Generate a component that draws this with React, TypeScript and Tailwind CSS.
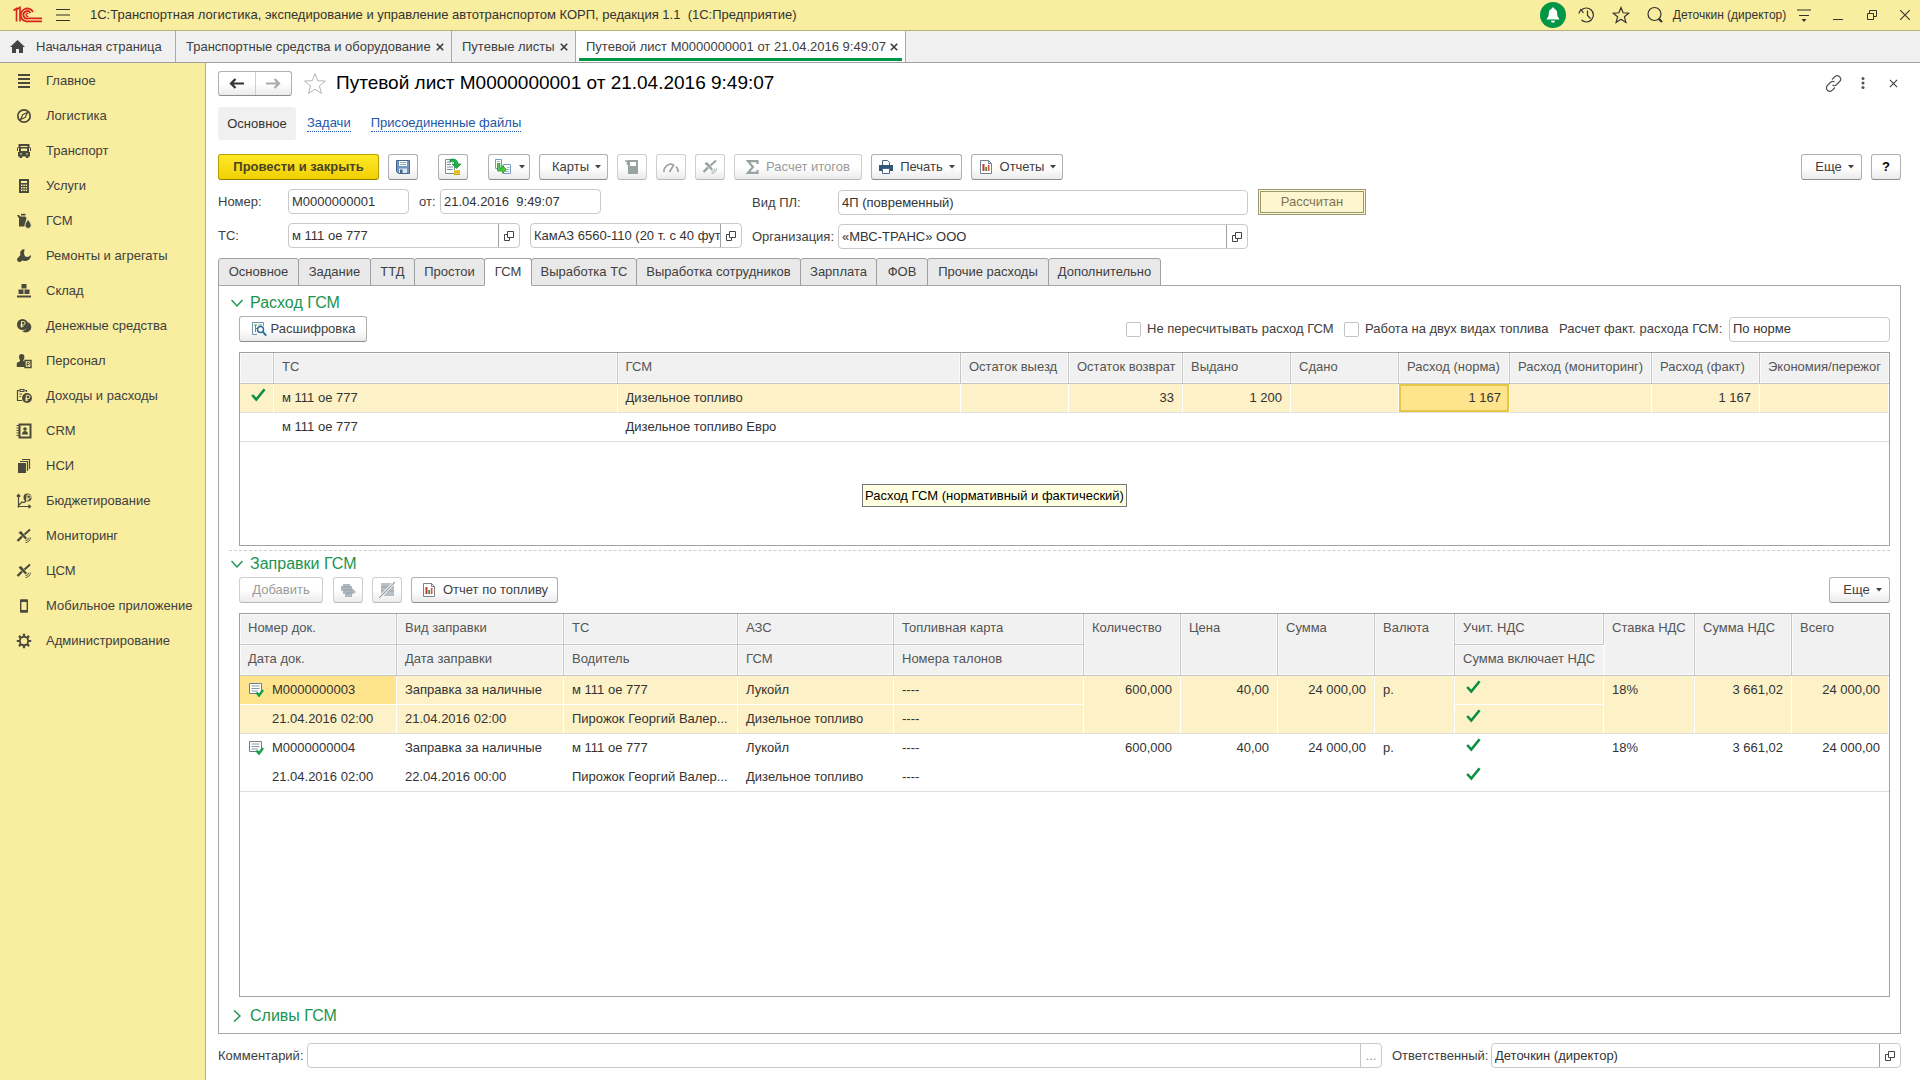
import React from 'react';
import clsx from 'clsx';

type IconProps = { className?: string };

const COLOR = '#4a4a3c';

/* ---------- shared icons ---------- */

const OneCLogo = () => (
    <svg width="30" height="18" viewBox="0 0 30 18" fill="none" stroke="#d8251c" strokeWidth="1.8">
        <path d="M1.500 4.500 4.500 2.500V15.500M8 15.500V1.500L4.500 3.500" strokeWidth="1.600" />
        <path d="M21 6A6.500 6.500 0 1 0 16.500 15.400H30" />
        <path d="M18.300 7A3.700 3.700 0 1 0 16.300 12.400H30" />
        <path d="M16.200 7.800a1.400 1.400 0 1 0 .2 2" strokeWidth="1.200" />
    </svg>
);

const CheckMark: React.FC<IconProps> = ({ className }) => (
    <svg className={className} width="15" height="14" viewBox="0 0 15 14" fill="none" stroke="#0c8f45" strokeWidth="2.600">
        <path d="M1.200 7 5.300 11.600 13.600 1.200" />
    </svg>
);

const OpenIcon = () => (
    <svg width="10" height="10" viewBox="0 0 10 10" fill="none" stroke="#444" strokeWidth="1">
        <path d="M3.500.5h6v6h-6z" />
        <path d="M3.500 3.500h-3v6h5v-3" />
    </svg>
);

const Caret = () => (
    <svg width="6" height="4" viewBox="0 0 6 4" fill="#444">
        <path d="M0 0h6L3 3.500z" />
    </svg>
);

const CrossIcon: React.FC<{ size: number; width?: number }> = ({ size, width = 1.2 }) => (
    <svg width={size} height={size} viewBox="0 0 10 10" fill="none" stroke="#3a3a3a" strokeWidth={width}>
        <path d="m1 1 8 8M9 1 1 9" />
    </svg>
);

const ReportIcon = () => (
    <svg width="16" height="16" viewBox="0 0 16 16" fill="none">
        <path d="M2.500 1.500h8l3 3v10h-11z" fill="#fff" stroke="#76838c" />
        <path d="M10.500 1.500v3h3" stroke="#76838c" />
        <path d="M4.500 5h2v7h-2z" fill="#c0392b" />
        <path d="M7.300 8h1.700v4H7.300z" fill="#3f8f3f" />
        <path d="M9.800 6h1.700v6H9.800z" fill="#d35430" />
    </svg>
);

const SatelliteShape = () => (
    <g fill="none" stroke="currentColor">
        <path d="M2.500 4.500 5 3l6 7-1.500 1.500z" fill="currentColor" stroke="none" />
        <path d="M14 1.500 8.500 6.500" strokeWidth="2" />
        <path d="M6 8.500 1.500 13" strokeWidth="2.400" />
        <path d="M9.500 14.500a5 5 0 0 0 5-5M9.500 12.700a3 3 0 0 0 3-3" strokeWidth=".9" />
    </g>
);

/* ---------- sidebar ---------- */

const Ruble: React.FC<{ x: number; y: number; color?: string }> = ({ x, y, color = '#f9ed9f' }) => (
    <path
        d={`M${x} ${y + 6}V${y}h2a1.600 1.600 0 0 1 0 3.300H${x - 1}M${x - 1} ${y + 4.8}h3`}
        fill="none"
        stroke={color}
        strokeWidth="1"
    />
);

const menuIcons: Record<string, React.ReactNode> = {
    main: <path d="M2 1h12v2H2zM2 5h12v2H2zM2 9h12v2H2zM2 13h12v2H2z" />,
    logistics: (
        <>
            <circle cx="8" cy="8" r="6.200" fill="none" stroke={COLOR} strokeWidth="1.700" />
            <path d="M11.500 4.500 9.300 9.300 4.500 11.500 6.700 6.700z" fill="none" stroke={COLOR} strokeWidth="1.200" />
        </>
    ),
    transport: (
        <>
            <path d="M2.500 1h11v3.500H15V8h-1V5h-1v4H3V5H2v3H1V4.500h1.500z" />
            <path d="M4.500 3h7v1h-7zM5 5.500h6V8H5z" fill="#f9ed9f" />
            <path d="M2 9h12v4.500h-1.500V15H10v-1.500H6V15H3.500v-1.500H2z" />
            <path d="M4 10.500h2v1H4zM10 10.500h2v1h-2z" fill="#f9ed9f" />
        </>
    ),
    services: (
        <>
            <path d="M3 1h10v14H3z" />
            <path d="M5 3h6v2H5zM5 6.500h1.500V8H5zM7.300 6.500h1.500V8H7.300zM9.600 6.500h1.500V8H9.600zM5 9h1.500v1.500H5zM7.300 9h1.500v1.500H7.300zM9.600 9h1.500v1.500H9.600zM5 11.500h1.500V13H5zM7.300 11.500h1.500V13H7.300zM9.600 11.500h1.500V13H9.600z" fill="#f9ed9f" />
        </>
    ),
    fuel: (
        <>
            <path d="M1 2h2l1.500 1.500H9.500L10.500 5l-2 8.500H3V5.500z" />
            <path d="M5 .8h4.500v1.700H5z" />
            <path d="M12 6.500s3.200 3.800 3.200 5.800a3.100 3.100 0 0 1-6.200 0c0-2 3-5.800 3-5.800z" stroke="#f9ed9f" strokeWidth=".8" />
        </>
    ),
    repair: <path d="M8.500 1C4.500 1.500 3.500 4.500 4.500 7L1.300 10.500c-1 2.500 1.500 4.500 3.700 3L6.500 12.500c4 1.500 8.500-.5 8.500-5.500l-3 2-3-.5L8 5.500z" />,
    stock: <path d="M5.500 1h5v4.500h-5zM2.500 6.500h5v4.500h-5zM8.500 6.500h5v4.500h-5zM1 12.500h14v2H1z" />,
    money: (
        <>
            <path d="M11 4c3 .5 4.500 3 4.300 5.500-.3 3-3 5-6 4.800-1.500-.1-2.500-.6-3.300-1.300C9.500 13 12.500 9 11 4z" />
            <circle cx="6.500" cy="6.500" r="5.500" />
            <Ruble x={5.5} y={3.5} />
        </>
    ),
    staff: (
        <>
            <path d="M3 4a2.700 3 0 0 1 5.400 0c0 2-1 3-1 3v1l1.600.8V14H.8v-3.500C.8 9 4 9 4 8V7S3 6 3 4z" />
            <path d="M9 7.500h6v7H9z" fill="#f9ed9f" stroke={COLOR} strokeWidth="1.400" />
            <path d="M11.200 13V9.500h1.300a.9.900 0 0 1 0 2h-1.300" fill="none" stroke={COLOR} />
        </>
    ),
    income: (
        <>
            <path d="M3 2.500H1.500v10H6M9 2.500h1.500V4M4 1.500h4v2H4zM3.500 6H6M3.500 8.500H5" fill="none" stroke={COLOR} strokeWidth="1.200" />
            <circle cx="11" cy="10" r="5" />
            <Ruble x={10.3} y={7.3} />
        </>
    ),
    crm: (
        <>
            <path d="M3.500 1.500h11v13h-11z" fill="none" stroke={COLOR} strokeWidth="2" />
            <path d="M.5 2.500H3M.5 5H3M.5 7.500H3M.5 10H3M.5 12.500H3" stroke={COLOR} strokeWidth="1.200" />
            <circle cx="9" cy="6" r="1.800" />
            <path d="M6 11.500c0-2 1.200-3.500 3-3.500s3 1.500 3 3.500z" />
        </>
    ),
    nsi: (
        <>
            <path d="M2 5h8v10H2z" />
            <path d="M4 3.500h7.500V13M6 1.500h7.500V11" fill="none" stroke={COLOR} strokeWidth="1.200" />
        </>
    ),
    budget: (
        <>
            <path d="M2.500 14.500V1.500M.8 3.500l1.700-2 1.700 2M1.500 13.500h13M12.500 11.800l2 1.700-2 1.700M3 12l3-3 2 .5L10 8" fill="none" stroke={COLOR} strokeWidth="1.200" />
            <circle cx="11.500" cy="4.500" r="4" />
            <Ruble x={11} y={2} />
        </>
    ),
    satellite: <SatelliteShape />,
    mobile: (
        <>
            <path d="M4.700 2h6.600v12H4.700z" fill="none" stroke={COLOR} strokeWidth="1.400" strokeLinejoin="round" />
            <path d="M5 2h6v2H5zM5 12h6v2H5z" />
        </>
    ),
    admin: (
        <>
            <circle cx="8" cy="8" r="4.200" fill="none" stroke={COLOR} strokeWidth="1.900" />
            <path d="M8 .8v2.700M8 12.500v2.700M.8 8h2.700M12.500 8h2.700M2.900 2.900l1.900 1.900M11.200 11.200l1.900 1.900M13.100 2.900l-1.900 1.900M4.800 11.200l-1.900 1.900" stroke={COLOR} strokeWidth="2.200" />
        </>
    ),
};

const menuItems = [
    { label: 'Главное', icon: 'main' },
    { label: 'Логистика', icon: 'logistics' },
    { label: 'Транспорт', icon: 'transport' },
    { label: 'Услуги', icon: 'services' },
    { label: 'ГСМ', icon: 'fuel' },
    { label: 'Ремонты и агрегаты', icon: 'repair' },
    { label: 'Склад', icon: 'stock' },
    { label: 'Денежные средства', icon: 'money' },
    { label: 'Персонал', icon: 'staff' },
    { label: 'Доходы и расходы', icon: 'income' },
    { label: 'CRM', icon: 'crm' },
    { label: 'НСИ', icon: 'nsi' },
    { label: 'Бюджетирование', icon: 'budget' },
    { label: 'Мониторинг', icon: 'satellite' },
    { label: 'ЦСМ', icon: 'satellite' },
    { label: 'Мобильное приложение', icon: 'mobile' },
    { label: 'Администрирование', icon: 'admin' },
];

const Sidebar = () => (
    <nav className="w-[206px] shrink-0 border-r border-[#b9b07a] bg-[#f9ed9f]">
        {menuItems.map((item) => (
            <a key={item.label} href="#" className="flex h-[35px] items-center gap-[14px] pl-4 text-[#404040]">
                <svg width="16" height="16" viewBox="0 0 16 16" fill={COLOR} color={COLOR}>
                    {menuIcons[item.icon]}
                </svg>
                {item.label}
            </a>
        ))}
    </nav>
);

/* ---------- window chrome ---------- */

const TitleBar = () => (
    <header className="flex h-[31px] shrink-0 items-center border-b border-[#b9b07a] bg-[#f9ed9f] text-[#333]">
        <div className="flex w-[90px] items-center gap-[13px] pl-3">
            <OneCLogo />
            <button aria-label="Меню">
                <svg width="16" height="14" viewBox="0 0 16 14" stroke="#333" strokeWidth="1.200">
                    <path d="M1 1.500h14M1 7h14M1 12.500h14" />
                </svg>
            </button>
        </div>
        <h1 className="flex-1 whitespace-pre">
            1С:Транспортная логистика, экспедирование и управление автотранспортом КОРП, редакция 1.1  (1С:Предприятие)
        </h1>
        <button aria-label="Уведомления" className="flex w-[34px] justify-center">
            <svg width="26" height="26" viewBox="0 0 26 26">
                <circle cx="13" cy="13" r="13" fill="#009646" />
                <path d="M13 5.500c.8 0 1.300.6 1.300 1.300 2 .7 2.900 2.400 2.900 4.700 0 2.900.9 3.900 2 5v1H6.800v-1c1.100-1.100 2-2.100 2-5 0-2.300.9-4 2.900-4.700 0-.7.500-1.300 1.300-1.300zM11 18.700h4a2 2 0 0 1-4 0z" fill="#fff" />
            </svg>
        </button>
        <button aria-label="История" className="flex w-[34px] justify-center">
            <svg width="18" height="18" viewBox="0 0 18 18" fill="none" stroke="#333" strokeWidth="1.200">
                <path d="M3 4.500A7 7 0 1 1 3.500 14" />
                <path d="M.8 7.500 2.800 3.500 5.500 6.800M9.500 4.500V9.500l3 3" />
            </svg>
        </button>
        <button aria-label="Избранное" className="flex w-[34px] justify-center">
            <svg width="18" height="18" viewBox="0 0 18 18" fill="none" stroke="#333" strokeWidth="1.200">
                <path d="m9 1.500 2.100 5.300 5.700.4-4.400 3.600 1.500 5.600L9 13.300l-4.900 3.100 1.500-5.600L1.200 7.200l5.700-.4z" />
            </svg>
        </button>
        <button aria-label="Поиск" className="flex w-[34px] justify-center">
            <svg width="18" height="18" viewBox="0 0 18 18" fill="none" stroke="#333" strokeWidth="1.200">
                <circle cx="8.500" cy="8" r="6.500" />
                <path d="m12.500 12.500 3.500 3.500" strokeWidth="2.200" />
            </svg>
        </button>
        <button className="w-[115px] text-[12px] whitespace-nowrap">Деточкин (директор)</button>
        <button aria-label="Настройки" className="flex w-[34px] justify-center">
            <svg width="16" height="16" viewBox="0 0 16 16" fill="none" stroke="#333" strokeWidth="1.200">
                <path d="M1 3h14M3 8.500h10" />
                <path d="M5.500 12h5L8 15z" fill="#333" stroke="none" />
            </svg>
        </button>
        <button aria-label="Свернуть" className="flex w-[34px] justify-center">
            <svg width="10" height="10" viewBox="0 0 10 10" stroke="#333">
                <path d="M0 9.500h10" />
            </svg>
        </button>
        <button aria-label="Развернуть" className="flex w-[34px] justify-center">
            <svg width="10" height="10" viewBox="0 0 10 10" fill="none" stroke="#333">
                <path d="M.5 3.500h6v6h-6zM2.500 3V.5h7v6H7" />
            </svg>
        </button>
        <button aria-label="Закрыть" className="flex w-[31px] justify-center">
            <CrossIcon size={12} width={1} />
        </button>
    </header>
);

const windowTabs = [
    { label: 'Транспортные средства и оборудование', width: 'w-[276px]' },
    { label: 'Путевые листы', width: 'w-[124px]' },
    { label: 'Путевой лист М0000000001 от 21.04.2016 9:49:07', width: 'w-[330px]', active: true },
];

const WindowTabs = () => (
    <div className="flex h-[32px] shrink-0 border-b border-[#a0a0a0] bg-[#f0f0f0] text-[#404040]">
        <button className="flex w-[176px] items-center gap-[11px] border-r border-[#a8a8a8] pl-[10px]">
            <svg width="15" height="13" viewBox="0 0 15 13" fill="#444">
                <path d="M7.500 0 0 7h2v6h4V9h3v4h4V7h2z" />
            </svg>
            Начальная страница
        </button>
        {windowTabs.map((tab) => (
            <div
                key={tab.label}
                className={clsx('flex border-r border-[#a8a8a8] px-[3px]', tab.width, tab.active && 'bg-white pb-px')}
            >
                <div
                    className={clsx(
                        'flex flex-1 items-center justify-between pr-[4px] pl-[7px]',
                        tab.active && 'border-b-[3px] border-[#009646] pt-[4px]',
                    )}
                >
                    <button className="whitespace-nowrap">{tab.label}</button>
                    <button aria-label="Закрыть вкладку">
                        <CrossIcon size={8} width={2} />
                    </button>
                </div>
            </div>
        ))}
    </div>
);

/* ---------- form controls ---------- */

type ButtonProps = React.ButtonHTMLAttributes<HTMLButtonElement>;

const Button: React.FC<ButtonProps> = ({ className, disabled, ...props }) => (
    <button
        disabled={disabled}
        className={clsx(
            'flex h-[26px] shrink-0 items-center justify-center rounded-[3px] border bg-linear-to-b from-white from-50% to-[#ebebeb] whitespace-nowrap',
            disabled ? 'border-[#cfcfcf] border-b-[#b8b8b8] text-[#9a9a9a]' : 'border-[#b0b0b0] border-b-[#8c8c8c] text-[#404040]',
            className,
        )}
        {...props}
    />
);

const inputBox = 'flex h-[25px] items-stretch overflow-hidden rounded-[4px] border border-[#c9c9c9] bg-white';

type FieldProps = { id: string; value: string; className?: string; open?: boolean; label?: string };

const Field: React.FC<FieldProps> = ({ id, value, className, open, label }) => (
    <div className={clsx(inputBox, className)}>
        <input id={id} aria-label={label} defaultValue={value} className="min-w-0 flex-1 pl-[3px] text-[#333] outline-none" />
        {open && (
            <button aria-label="Открыть" className="flex w-[21px] shrink-0 items-center justify-center border-l border-[#a0a0a0]">
                <OpenIcon />
            </button>
        )}
    </div>
);

const GroupTitle: React.FC<{ children: React.ReactNode; collapsed?: boolean }> = ({ children, collapsed }) => (
    <button className="flex h-[26px] items-center gap-[7px] text-[16px] text-[#1a9550]">
        <svg width="12" height="12" viewBox="0 0 12 12" fill="none" stroke="#1a9550" strokeWidth="1.400">
            <path d={collapsed ? 'm3 .500 6 5.500-6 5.500' : 'm.500 3 5.500 6 5.500-6'} />
        </svg>
        {children}
    </button>
);

/* ---------- document header ---------- */

const DocumentHeader = () => (
    <>
        <div className="flex h-[26px] items-center">
            <div className="flex h-[25px] w-[74px] rounded-[3px] border border-[#b0b0b0] border-b-[#8c8c8c] bg-linear-to-b from-white from-50% to-[#ebebeb]">
                <button aria-label="Назад" className="flex flex-1 items-center justify-center border-r border-[#cfcfcf]">
                    <svg width="15" height="11" viewBox="0 0 15 11" fill="none" stroke="#333" strokeWidth="2.200">
                        <path d="M15 5.500H2M6.500 1 2 5.500 6.500 10" />
                    </svg>
                </button>
                <button aria-label="Вперед" className="flex flex-1 items-center justify-center">
                    <svg width="15" height="11" viewBox="0 0 15 11" fill="none" stroke="#aaa" strokeWidth="2.200">
                        <path d="M0 5.500h13M8.500 1 13 5.500 8.500 10" />
                    </svg>
                </button>
            </div>
            <button aria-label="В избранное" className="ml-[11px]">
                <svg width="24" height="23" viewBox="0 0 24 23" fill="none" stroke="#b4b4b4">
                    <path d="m12 1.500 2.700 7.200 7.800.4-6.100 4.800 2.100 7.600L12 17.200l-6.500 4.300 2.100-7.600L1.500 9.100l7.800-.4z" />
                </svg>
            </button>
            <h2 className="ml-[9px] flex-1 text-[19px] text-black">Путевой лист М0000000001 от 21.04.2016 9:49:07</h2>
            <div className="flex items-center gap-[14px]">
                <button aria-label="Ссылка" className="flex w-4 justify-center">
                    <svg width="17" height="17" viewBox="0 0 17 17" fill="none" stroke="#555" strokeWidth="1.200" className="shrink-0">
                        <path d="M7 4.500 9.800 1.800a3.300 3.300 0 0 1 4.800 4.700l-3 3a3.300 3.300 0 0 1-4.200.4M10 12.500l-2.800 2.700a3.300 3.300 0 0 1-4.800-4.700l3-3a3.300 3.300 0 0 1 4.200-.4" />
                    </svg>
                </button>
                <button aria-label="Действия" className="flex w-4 justify-center">
                    <svg width="4" height="12" viewBox="0 0 4 12" fill="#555">
                        <circle cx="2" cy="1.600" r="1.500" />
                        <circle cx="2" cy="6" r="1.500" />
                        <circle cx="2" cy="10.400" r="1.500" />
                    </svg>
                </button>
                <button aria-label="Закрыть" className="flex w-4 justify-center">
                    <CrossIcon size={9} />
                </button>
            </div>
        </div>
        <div className="mt-[11px] flex h-[33px] items-center">
            <span className="flex h-full w-[78px] items-center justify-center rounded-[3px] bg-[#f0f0f0] text-[#333]">Основное</span>
            <a href="#" className="ml-[11px] border-b border-dotted border-[#2257a8] leading-4 text-[#2257a8]">Задачи</a>
            <a href="#" className="ml-5 border-b border-dotted border-[#2257a8] leading-4 text-[#2257a8]">Присоединенные файлы</a>
        </div>
    </>
);

const Toolbar = () => (
    <div className="mt-[14px] flex items-center">
        <button className="h-[26px] w-[161px] rounded-[3px] border border-[#b59e00] border-b-[#8f7d00] bg-linear-to-b from-[#ffe925] to-[#f0d000] font-bold text-[#4a4320]">
            Провести и закрыть
        </button>
        <Button aria-label="Записать" className="ml-[9px] w-[30px]">
            <svg width="16" height="16" viewBox="0 0 16 16" fill="none">
                <path d="M1.500 1.500h13v13h-11l-2-2z" fill="#6f96c0" stroke="#41648c" />
                <path d="M4 2h8v5H4z" fill="#fff" />
                <path d="M5 3.500h6M5 5.500h6" stroke="#8aa5c0" />
                <path d="M4 9.500h8V14H4z" fill="#dfe6ec" />
                <path d="M5 10.500h2.500V14H5z" fill="#41648c" />
            </svg>
        </Button>
        <Button aria-label="Провести" className="ml-5 w-[30px]">
            <svg width="18" height="18" viewBox="0 0 18 18" fill="none">
                <path d="M1.500 1.500h9v14h-9z" fill="#fff" stroke="#7a8f9c" />
                <path d="M3 4h4M3 6.500h4M3 9h6M3 11.500h6" stroke="#7a8f9c" />
                <path d="M6 1.500c5-1.500 8 1 8 4.500h3l-4.500 4.500L8 6h3c0-2-2-3-5-2z" fill="#22b24c" stroke="#128a38" strokeWidth=".7" />
                <path d="M10 12h6v4.500h-6z" fill="#f3cf3a" />
                <path d="M10 14h6M10 16.500h6" stroke="#c79c12" />
            </svg>
        </Button>
        <Button aria-label="Создать на основании" className="ml-5 w-[42px] gap-[7px]">
            <svg width="18" height="16" viewBox="0 0 18 16" fill="none">
                <path d="M1.500.5h6v9h-6zM9.500 5.500h7v9h-7z" fill="#fff" stroke="#7a9cba" />
                <path d="M13 8.500h2.500M13 10.500h2.500M11 12.500h4M3 2.500h3" stroke="#9db8d0" />
                <path d="M3.500 4.500h2.500V9h2.500V6.700l4 3.800-4 3.800V12h-5z" fill="#4cc93f" stroke="#1b8a22" strokeWidth=".7" />
            </svg>
            <Caret />
        </Button>
        <Button className="ml-[9px] w-[69px] gap-[6px] pl-[6px]">
            Карты
            <Caret />
        </Button>
        <Button disabled aria-label="Топливо" className="ml-[9px] w-[30px]">
            <svg width="16" height="16" viewBox="0 0 16 16" fill="none" stroke="#97a3a0" strokeWidth="2">
                <path d="M1 2h2.500v4" strokeWidth="1.500" />
                <path d="M5 2h8v12H5z" />
                <path d="M5 8h8v6H5z" fill="#97a3a0" />
            </svg>
        </Button>
        <Button disabled aria-label="Спидометр" className="ml-[9px] w-[30px]">
            <svg width="16" height="12" viewBox="0 0 16 12" fill="none" stroke="#97a3a0" strokeWidth="1.700">
                <path d="M1 11a7 7 0 0 1 9-7.500M13 5.500a7 7 0 0 1 2 5.500M6.500 11 11 3.500" />
            </svg>
        </Button>
        <Button disabled aria-label="Мониторинг" className="ml-[9px] w-[30px]">
            <svg width="16" height="16" viewBox="0 0 16 16" color="#97a3a0">
                <SatelliteShape />
            </svg>
        </Button>
        <Button disabled className="ml-[9px] w-[128px] gap-[7px]">
            <svg width="13" height="14" viewBox="0 0 13 14" fill="none" stroke="#97a3a0" strokeWidth="2.200">
                <path d="M11.500 4V1.200H2L7 7l-5 5.800h9.500V10" />
            </svg>
            Расчет итогов
        </Button>
        <Button className="ml-[9px] w-[91px] gap-[6px]">
            <svg width="16" height="16" viewBox="0 0 16 16">
                <path d="M4.500 1.500h5l2 2V7h-7z" fill="#fff" stroke="#44688a" />
                <path d="M1 6h14v6H1z" fill="#2f5878" />
                <path d="M4.500 9.500h7v5h-7z" fill="#fff" stroke="#44688a" />
            </svg>
            Печать
            <Caret />
        </Button>
        <Button className="ml-[9px] w-[92px] gap-[6px]">
            <ReportIcon />
            Отчеты
            <Caret />
        </Button>
        <Button className="ml-auto w-[61px] gap-[6px] pl-[6px]">
            Еще
            <Caret />
        </Button>
        <Button aria-label="Справка" className="ml-[9px] w-[30px] font-bold text-black">?</Button>
    </div>
);

const DocumentFields = () => (
    <div className="mt-[9px] flex text-[#404040]">
        <div className="flex w-[534px] flex-col gap-[9px]">
            <div className="flex items-center">
                <label htmlFor="number" className="w-[70px]">Номер:</label>
                <Field id="number" value="М0000000001" className="w-[121px]" />
                <label htmlFor="date" className="w-[31px] pl-[10px]">от:</label>
                <Field id="date" value="21.04.2016  9:49:07" className="w-[161px]" />
            </div>
            <div className="flex items-center">
                <label htmlFor="vehicle" className="w-[70px]">ТС:</label>
                <Field id="vehicle" value="м 111 ое 777" className="w-[232px]" open />
                <Field id="model" label="Модель ТС" value="КамАЗ 6560-110 (20 т. с 40 футовым)" className="ml-[10px] w-[212px]" open />
            </div>
        </div>
        <div className="flex flex-col gap-[9px] pt-px">
            <div className="flex items-center">
                <label htmlFor="kind" className="w-[86px]">Вид ПЛ:</label>
                <Field id="kind" value="4П (повременный)" className="w-[410px]" />
            </div>
            <div className="flex items-center">
                <label htmlFor="org" className="w-[86px]">Организация:</label>
                <Field id="org" value="«МВС-ТРАНС» ООО" className="w-[410px]" open />
            </div>
        </div>
        <div className="ml-[10px] flex h-[26px] w-[108px] items-center justify-center border-[3px] border-double border-[#9c9872] bg-[#fdf6cf] text-[#80744f]">
            Рассчитан
        </div>
    </div>
);

const formTabs = [
    { label: 'Основное', width: 'w-[81px]' },
    { label: 'Задание', width: 'w-[73px]' },
    { label: 'ТТД', width: 'w-[45px]' },
    { label: 'Простои', width: 'w-[71px]' },
    { label: 'ГСМ', width: 'w-[48px]' },
    { label: 'Выработка ТС', width: 'w-[106px]' },
    { label: 'Выработка сотрудников', width: 'w-[165px]' },
    { label: 'Зарплата', width: 'w-[77px]' },
    { label: 'ФОВ', width: 'w-[52px]' },
    { label: 'Прочие расходы', width: 'w-[122px]' },
    { label: 'Дополнительно', width: 'w-[113px]' },
];

const FormTabs = () => (
    <div role="tablist" className="mt-[9px] flex">
        {formTabs.map((tab) => {
            const active = tab.label === 'ГСМ';
            return (
                <button
                    key={tab.label}
                    role="tab"
                    aria-selected={active}
                    className={clsx(
                        '-mr-px h-[28px] rounded-t-[3px] border whitespace-nowrap text-[#404040]',
                        tab.width,
                        active ? 'z-10 border-[#a0a0a0] border-b-white bg-white' : 'border-[#a0a0a0] bg-[#e9e9e9]',
                    )}
                >
                    {tab.label}
                </button>
            );
        })}
    </div>
);

/* ---------- tables ---------- */

const headCell = 'h-[31px] overflow-hidden border-r border-b border-[#c6c6c6] bg-[#f1f1f1] px-2 text-left align-top font-normal leading-[28px] whitespace-nowrap text-[#555] shadow-[inset_0_0_0_1px_#fafafa] last:border-r-0';
const bodyCell = 'h-[29px] truncate px-2 align-top leading-[27px] text-[#333]';

const Check: React.FC<{ className?: string }> = ({ className }) => <CheckMark className={clsx('mt-[4px]', className)} />;

const consumptionColumns = [
    { title: '', width: 'w-[34px]' },
    { title: 'ТС', width: '' },
    { title: 'ГСМ', width: '' },
    { title: 'Остаток выезд', width: 'w-[108px]' },
    { title: 'Остаток возврат', width: 'w-[114px]' },
    { title: 'Выдано', width: 'w-[108px]' },
    { title: 'Сдано', width: 'w-[108px]' },
    { title: 'Расход (норма)', width: 'w-[111px]' },
    { title: 'Расход (мониторинг)', width: 'w-[142px]' },
    { title: 'Расход (факт)', width: 'w-[108px]' },
    { title: 'Экономия/пережог', width: 'w-[129px]' },
];

const consumptionRows = [
    { main: true, values: ['м 111 ое 777', 'Дизельное топливо', '', '33', '1 200', '', '1 167', '', '1 167', ''] },
    { main: false, values: ['м 111 ое 777', 'Дизельное топливо Евро', '', '', '', '', '', '', '', ''] },
];

const ConsumptionTable = () => (
    <div className="relative h-[194px] border border-[#a0a0a0] bg-white">
        <table className="w-full table-fixed border-separate border-spacing-0">
            <thead>
                <tr>
                    {consumptionColumns.map((column, index) => (
                        <th key={index} className={clsx(headCell, column.width)}>{column.title}</th>
                    ))}
                </tr>
            </thead>
            <tbody>
                {consumptionRows.map((row, rowIndex) => {
                    const cell = clsx(bodyCell, 'border-b border-b-[#dedede]', row.main && 'border-r border-r-white', !row.main && 'pr-[9px]');
                    return (
                        <tr key={rowIndex} className={clsx(row.main && 'bg-[#fdf1c7]')}>
                            <td className={cell}>{row.main && <Check className="ml-[3px]" />}</td>
                            {row.values.map((value, index) => {
                                const current = row.main && index === 6;
                                return (
                                    <td
                                        key={index}
                                        className={clsx(
                                            cell,
                                            index > 1 && 'text-right',
                                            current && 'bg-[#fee48d] shadow-[inset_0_0_0_2px_#e5c646]',
                                        )}
                                    >
                                        {value}
                                    </td>
                                );
                            })}
                        </tr>
                    );
                })}
            </tbody>
        </table>
        <div role="tooltip" className="absolute top-[131px] left-[622px] flex h-[23px] w-[265px] items-center justify-center border border-[#767676] bg-[#ffffe1] whitespace-nowrap text-black">
            Расход ГСМ (нормативный и фактический)
        </div>
    </div>
);

type Refuel = {
    number: string;
    docDate: string;
    kind: string;
    date: string;
    vehicle: string;
    driver: string;
    station: string;
    fuel: string;
};

const refuels: Refuel[] = [
    {
        number: 'М0000000003',
        docDate: '21.04.2016 02:00',
        kind: 'Заправка за наличные',
        date: '21.04.2016 02:00',
        vehicle: 'м 111 ое 777',
        driver: 'Пирожок Георгий Валер...',
        station: 'Лукойл',
        fuel: 'Дизельное топливо',
    },
    {
        number: 'М0000000004',
        docDate: '21.04.2016 02:00',
        kind: 'Заправка за наличные',
        date: '22.04.2016 00:00',
        vehicle: 'м 111 ое 777',
        driver: 'Пирожок Георгий Валер...',
        station: 'Лукойл',
        fuel: 'Дизельное топливо',
    },
];

const DocumentIcon = () => (
    <svg width="16" height="15" viewBox="0 0 16 15" fill="none" className="shrink-0">
        <path d="M1.500 1.500h12v10h-12z" fill="#fff" stroke="#6d7f8c" />
        <path d="M3.500 4h8M3.500 6.500h8M3.500 9h6" stroke="#8b9aa5" />
        <path d="m8.500 10.500 2.500 3 4-5.500" stroke="#14a045" strokeWidth="2.400" />
    </svg>
);

const RefuelRows: React.FC<{ row: Refuel; selected: boolean }> = ({ row, selected }) => {
    const upper = clsx(bodyCell, 'border-r border-b border-white');
    const lower = clsx(bodyCell, 'border-b border-b-[#dedede]', selected ? 'border-r border-r-white' : 'pr-[9px]');
    const tone = clsx(selected && 'bg-[#fdf1c7]');
    return (
        <>
            <tr className={tone}>
                <td className={clsx(upper, selected && 'bg-[#fee48d]')}>
                    <span className="flex items-center gap-2">
                        <DocumentIcon />
                        {row.number}
                    </span>
                </td>
                <td className={upper}>{row.kind}</td>
                <td className={upper}>{row.vehicle}</td>
                <td className={upper}>{row.station}</td>
                <td className={upper}>----</td>
                <td rowSpan={2} className={clsx(lower, 'text-right')}>600,000</td>
                <td rowSpan={2} className={clsx(lower, 'text-right')}>40,00</td>
                <td rowSpan={2} className={clsx(lower, 'text-right')}>24 000,00</td>
                <td rowSpan={2} className={lower}>р.</td>
                <td className={upper}><Check className="ml-[3px]" /></td>
                <td rowSpan={2} className={lower}>18%</td>
                <td rowSpan={2} className={clsx(lower, 'text-right')}>3 661,02</td>
                <td rowSpan={2} className={clsx(lower, 'text-right')}>24 000,00</td>
            </tr>
            <tr className={tone}>
                <td className={clsx(lower, 'pl-8')}>{row.docDate}</td>
                <td className={lower}>{row.date}</td>
                <td className="h-[29px] border-r border-b border-r-white border-b-[#dedede] pl-2 align-top leading-[27px] whitespace-nowrap text-[#333]">
                    {row.driver}
                </td>
                <td className={lower}>{row.fuel}</td>
                <td className={lower}>----</td>
                <td className={lower}><Check className="ml-[3px]" /></td>
            </tr>
        </>
    );
};

const RefuelTable = () => (
    <div className="flex-1 border border-[#a0a0a0] bg-white">
        <table className="w-full table-fixed border-separate border-spacing-0">
            <thead>
                <tr>
                    <th className={clsx(headCell, 'w-[157px]')}>Номер док.</th>
                    <th className={clsx(headCell, 'w-[167px]')}>Вид заправки</th>
                    <th className={clsx(headCell, 'w-[174px]')}>ТС</th>
                    <th className={clsx(headCell, 'w-[156px]')}>АЗС</th>
                    <th className={headCell}>Топливная карта</th>
                    <th rowSpan={2} className={clsx(headCell, 'w-[97px]')}>Количество</th>
                    <th rowSpan={2} className={clsx(headCell, 'w-[97px]')}>Цена</th>
                    <th rowSpan={2} className={clsx(headCell, 'w-[97px]')}>Сумма</th>
                    <th rowSpan={2} className={clsx(headCell, 'w-[80px]')}>Валюта</th>
                    <th className={clsx(headCell, 'w-[149px]')}>Учит. НДС</th>
                    <th rowSpan={2} className={clsx(headCell, 'w-[91px]')}>Ставка НДС</th>
                    <th rowSpan={2} className={clsx(headCell, 'w-[97px]')}>Сумма НДС</th>
                    <th rowSpan={2} className={clsx(headCell, 'w-[97px]')}>Всего</th>
                </tr>
                <tr>
                    <th className={headCell}>Дата док.</th>
                    <th className={headCell}>Дата заправки</th>
                    <th className={headCell}>Водитель</th>
                    <th className={headCell}>ГСМ</th>
                    <th className={headCell}>Номера талонов</th>
                    <th className={clsx(headCell, 'last:border-r')}>Сумма включает НДС</th>
                </tr>
            </thead>
            <tbody>
                {refuels.map((row, index) => (
                    <RefuelRows key={row.number} row={row} selected={index === 0} />
                ))}
            </tbody>
        </table>
    </div>
);

/* ---------- fuel page ---------- */

const CheckOption: React.FC<{ label: string; className?: string }> = ({ label, className }) => (
    <label className={clsx('flex items-center gap-[6px]', className)}>
        <input type="checkbox" className="size-[15px] appearance-none rounded-[2px] border border-[#c4c4c4] bg-white" />
        {label}
    </label>
);

const FuelPanel = () => (
    <div className="-mt-px flex flex-1 flex-col border border-[#a8a8a8] pt-[4px] pr-[10px] pl-5 text-[#404040]">
        <div className="-ml-[8px]">
            <GroupTitle>Расход ГСМ</GroupTitle>
        </div>
        <div className="mb-[10px] flex items-center">
            <Button className="w-[128px] gap-[4px]">
                <svg width="16" height="16" viewBox="0 0 16 16" fill="none">
                    <path d="M12.500 5V1.500h-11v12H6" stroke="#6f93a8" />
                    <path d="M3 4h3M4.500 4v7M4.500 7.500H7M7.500 4H11" stroke="#4e9a6b" />
                    <circle cx="9.500" cy="8.500" r="3" stroke="#2d6f9e" strokeWidth="1.500" />
                    <path d="m11.700 10.700 3.500 4" stroke="#2d6f9e" strokeWidth="2" />
                </svg>
                Расшифровка
            </Button>
            <CheckOption label="Не пересчитывать расход ГСМ" className="ml-auto w-[218px]" />
            <CheckOption label="Работа на двух видах топлива" className="w-[215px]" />
            <label htmlFor="mode" className="w-[170px]">Расчет факт. расхода ГСМ:</label>
            <Field id="mode" value="По норме" className="w-[161px]" />
        </div>
        <ConsumptionTable />
        <div className="mt-[4px] -ml-[10px] border-t border-dashed border-[#cfcfcf]" />
        <div className="-ml-[8px]">
            <GroupTitle>Заправки ГСМ</GroupTitle>
        </div>
        <div className="mb-[10px] flex items-center gap-[9px]">
            <Button disabled className="w-[84px]">Добавить</Button>
            <Button disabled aria-label="Выбрать" className="ml-px w-[30px]">
                <svg width="16" height="15" viewBox="0 0 16 15" fill="#adb7bd">
                    <path d="M3 1h7v2h2v2l4 4-3 2h-1v3H5v-3H3V8H1V3h2z" />
                    <path d="M3 4h8M4 7h8M6 10h6" stroke="#8f9ba3" strokeWidth=".8" />
                </svg>
            </Button>
            <Button disabled aria-label="Удалить" className="w-[30px]">
                <svg width="16" height="16" viewBox="0 0 16 16" fill="none">
                    <path d="M2 1h13v13H2z" fill="#b9c0c5" />
                    <path d="M2 5h13M2 9h13" stroke="#98a3aa" />
                    <path d="M0 16 16 0" stroke="#fff" strokeWidth="3" />
                    <path d="M0 16 16 0" stroke="#8f9ba3" strokeWidth="1.200" />
                </svg>
            </Button>
            <Button className="w-[147px] gap-[6px]">
                <ReportIcon />
                Отчет по топливу
            </Button>
            <Button className="ml-auto w-[61px] gap-[6px] pl-[6px]">
                Еще
                <Caret />
            </Button>
        </div>
        <RefuelTable />
        <div className="-ml-[8px] pt-[6px] pb-[4px]">
            <GroupTitle collapsed>Сливы ГСМ</GroupTitle>
        </div>
    </div>
);

const Footer = () => (
    <div className="mt-[9px] flex items-center text-[#404040]">
        <label htmlFor="comment" className="w-[89px]">Комментарий:</label>
        <div className={clsx(inputBox, 'flex-1')}>
            <input id="comment" className="min-w-0 flex-1 px-[3px] outline-none" />
            <button aria-label="Выбрать" className="w-[21px] border-l border-[#c4c4c4] text-[#999]">...</button>
        </div>
        <label htmlFor="owner" className="w-[109px] pl-[10px]">Ответственный:</label>
        <Field id="owner" value="Деточкин (директор)" className="w-[410px]" open />
    </div>
);

const App = () => (
    <div className="flex min-h-screen flex-col bg-white font-['Liberation_Sans',Arial,sans-serif] text-[13px] leading-4">
        <TitleBar />
        <WindowTabs />
        <div className="flex flex-1">
            <Sidebar />
            <main className="flex min-w-0 flex-1 flex-col pt-[7px] pr-[19px] pb-3 pl-3">
                <DocumentHeader />
                <Toolbar />
                <DocumentFields />
                <FormTabs />
                <FuelPanel />
                <Footer />
            </main>
        </div>
    </div>
);

export default App;
